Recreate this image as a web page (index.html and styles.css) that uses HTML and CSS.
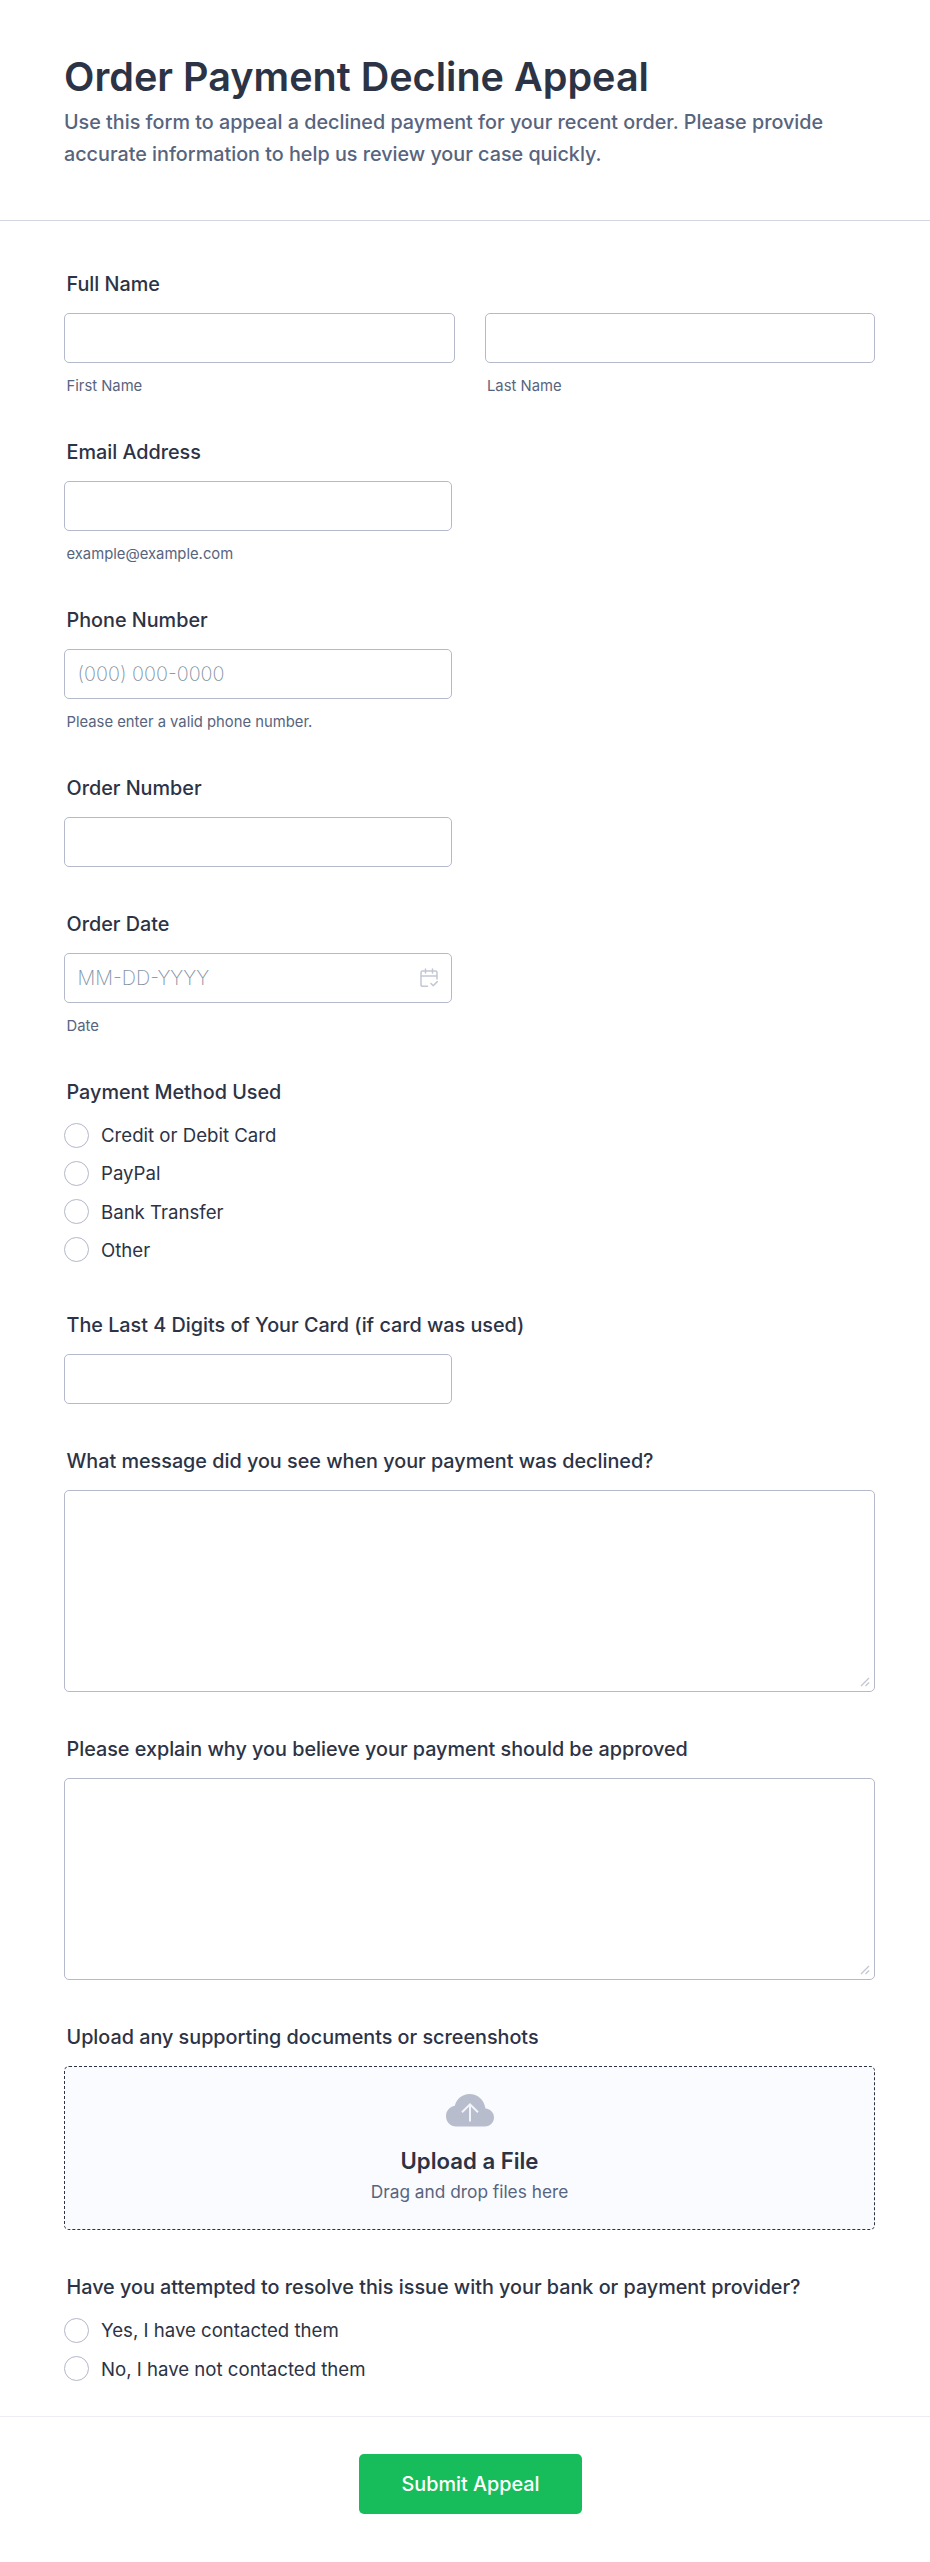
FILE: index.html
```html
<!DOCTYPE html>
<html lang="en">
<head>
  <meta charset="UTF-8">
  <title>Order Payment Decline Appeal</title>
  <link rel="stylesheet" href="styles.css">
</head>
<body>

  <form class="form" id="appeal-form">
    <header class="form-header">
      <h1>Order Payment Decline Appeal</h1>
      <p>Use this form to appeal a declined payment for your recent order. Please provide accurate information to help us review your case quickly.</p>
    </header>

    <div class="form-body">
      <div class="field">
        <label class="label" for="first">Full Name</label>
        <div class="name-row">
          <div>
            <input class="input full" type="text" id="first" name="first">
            <span class="sublabel">First Name</span>
          </div>
          <div>
            <input class="input full" type="text" id="last" name="last">
            <span class="sublabel">Last Name</span>
          </div>
        </div>
      </div>

      <div class="field">
        <label class="label" for="email">Email Address</label>
        <input class="input" type="email" id="email" name="email">
        <span class="sublabel">example@example.com</span>
      </div>

      <div class="field">
        <label class="label" for="phone">Phone Number</label>
        <input class="input" type="tel" id="phone" name="phone" placeholder="(000) 000-0000">
        <span class="sublabel">Please enter a valid phone number.</span>
      </div>

      <div class="field">
        <label class="label" for="order">Order Number</label>
        <input class="input" type="text" id="order" name="order">
      </div>

      <div class="field">
        <label class="label" for="date">Order Date</label>
        <div class="date-wrap">
          <input class="input" type="text" id="date" name="date" placeholder="MM-DD-YYYY">
          <svg class="calendar" viewBox="0 0 18 20">
            <path d="M1 8h16M17 11V4.500a1.500 1.500 0 0 0-1.500-1.500h-13A1.500 1.500 0 0 0 1 4.500v12A1.800 1.800 0 0 0 2.800 18.300H7.500M5.500 1v4M12.500 1v4M11 15.500l2.200 2.200L17.300 13.600"/>
          </svg>
        </div>
        <span class="sublabel">Date</span>
      </div>

      <div class="field radios">
        <span class="label">Payment Method Used</span>
        <label class="option"><input type="radio" name="method">Credit or Debit Card</label>
        <label class="option"><input type="radio" name="method">PayPal</label>
        <label class="option"><input type="radio" name="method">Bank Transfer</label>
        <label class="option"><input type="radio" name="method">Other</label>
      </div>

      <div class="field">
        <label class="label" for="digits">The Last 4 Digits of Your Card (if card was used)</label>
        <input class="input" type="text" id="digits" name="digits">
      </div>

      <div class="field">
        <label class="label" for="message">What message did you see when your payment was declined?</label>
        <div class="area-wrap">
          <textarea class="input area" id="message" name="message"></textarea>
          <svg class="grip" viewBox="0 0 10 10"><path d="M1 9l8-8M5.500 9L9 5.500"/></svg>
        </div>
      </div>

      <div class="field">
        <label class="label" for="reason">Please explain why you believe your payment should be approved</label>
        <div class="area-wrap">
          <textarea class="input area" id="reason" name="reason"></textarea>
          <svg class="grip" viewBox="0 0 10 10"><path d="M1 9l8-8M5.500 9L9 5.500"/></svg>
        </div>
      </div>

      <div class="field">
        <span class="label">Upload any supporting documents or screenshots</span>
        <div class="upload">
          <svg class="cloud" viewBox="0 0 48 33">
            <path class="cloud-shape" d="M10 32.500C4.500 32.500 0 28 0 22.300C0 16.500 3.800 12.500 8.800 11.700C10.500 5 16.300 0 23.500 0C31.600 0 38.200 5.800 39.500 14.500C44.500 15 48 18.800 48 23.300C48 28.500 44 32.500 39 32.500Z"/>
            <path class="cloud-arrow" d="M24 27.500V10.500M16 18.300l8-8 8 8"/>
          </svg>
          <strong>Upload a File</strong>
          <span>Drag and drop files here</span>
        </div>
      </div>

      <div class="field radios last">
        <span class="label">Have you attempted to resolve this issue with your bank or payment provider?</span>
        <label class="option"><input type="radio" name="contacted">Yes, I have contacted them</label>
        <label class="option"><input type="radio" name="contacted">No, I have not contacted them</label>
      </div>
    </div>

    <div class="form-footer">
      <button type="submit">Submit Appeal</button>
    </div>
  </form>

</body>
</html>
```
FILE: styles.css
```css
* {
  box-sizing: border-box;
}

body {
  margin: 0;
  background-color: #ffffff;
  font-family: Inter, "Liberation Sans", sans-serif;
  color: #2c3345;
}

.form-header {
  height: 221px;
  padding: 52px 64px 0;
  border-bottom: 1px solid #d3d5e0;
}

h1 {
  margin: 0;
  font-size: 39.57px;
  font-weight: 600;
  line-height: 50px;
}

.form-header p {
  margin: 4px 0 0;
  font-size: 19.75px;
  font-weight: 500;
  line-height: 32px;
  color: #57647e;
}

.form-body {
  padding: 51px 55px 0 64px;
}

.field {
  margin-bottom: 45.5px;
}

.label {
  display: block;
  margin-bottom: 16px;
  padding-left: 2.5px;
  font-size: 19.77px;
  font-weight: 500;
  line-height: 25px;
}

.name-row {
  display: grid;
  grid-template-columns: 1fr 1fr;
  gap: 30px;
}

.input {
  display: block;
  width: 388px;
  height: 49.5px;
  padding: 0 12.5px;
  border: 1px solid #b4b9cb;
  border-radius: 5px;
  background-color: #ffffff;
  font-family: inherit;
  font-size: 19.79px;
  color: #2c3345;
}

.input.full {
  width: 100%;
}

.input::placeholder {
  color: #7f92a5;
  font-weight: 250;
}

.sublabel {
  display: block;
  margin-top: 14px;
  padding-left: 2.5px;
  font-size: 14.8px;
  line-height: 18px;
  color: #57647e;
}

.date-wrap {
  position: relative;
  width: 388px;
}

.calendar {
  position: absolute;
  top: 15px;
  right: 14px;
  width: 18px;
  height: 20px;
  fill: none;
  stroke: #c3c7d5;
  stroke-width: 1.5;
  stroke-linecap: round;
  stroke-linejoin: round;
}

.radios {
  margin-bottom: 51px;
}

.option {
  display: flex;
  align-items: center;
  gap: 12px;
  height: 25px;
  margin-top: 13.3px;
  font-size: 18.62px;
}

.label + .option {
  margin-top: 17.5px;
}

.option input {
  appearance: none;
  width: 25px;
  height: 25px;
  margin: 0;
  border: 1.25px solid #b3b8ca;
  border-radius: 50%;
}

.area-wrap {
  position: relative;
}

.area {
  width: 100%;
  height: 201.5px;
  padding: 12px;
  resize: none;
}

.grip {
  position: absolute;
  right: 5px;
  bottom: 5px;
  width: 10px;
  height: 10px;
  fill: none;
  stroke: #c3c7d3;
  stroke-width: 1.3;
}

.upload {
  display: flex;
  flex-direction: column;
  align-items: center;
  height: 163.5px;
  padding-top: 27px;
  border: 1px dashed #2c3345;
  border-radius: 5px;
  background-color: #fafbfe;
}

.cloud {
  width: 48px;
  height: 33px;
}

.cloud-shape {
  fill: #b8bdcd;
}

.cloud-arrow {
  fill: none;
  stroke: #f3f4fa;
  stroke-width: 2;
}

.upload strong {
  margin-top: 20px;
  font-size: 22.2px;
  font-weight: 600;
  line-height: 28px;
}

.upload span {
  margin-top: 6px;
  font-size: 17.3px;
  line-height: 22px;
  color: #57647e;
}

.last {
  margin-bottom: 35px;
}

.form-footer {
  display: flex;
  justify-content: center;
  height: 146px;
  padding: 36.6px 0 0 11px;
  border-top: 1px solid #ededf5;
}

button {
  width: 222.6px;
  height: 60px;
  padding: 1px 0 0;
  border: none;
  border-radius: 5px;
  background-color: #18bd5b;
  color: #ffffff;
  font-family: inherit;
  font-size: 19.79px;
  font-weight: 500;
  cursor: pointer;
}
```
